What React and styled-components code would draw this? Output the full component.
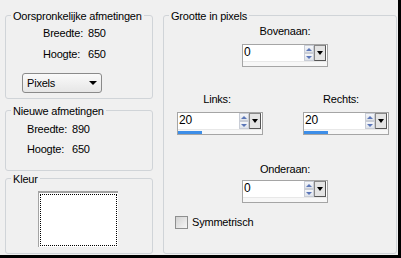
import React from "react";
import styled, { createGlobalStyle } from "styled-components";

const Global = createGlobalStyle`
  html, body { margin: 0; padding: 0; background: #000; }
  body { font-family: "Liberation Sans", Arial, sans-serif; font-size: 11px; letter-spacing: -0.2px; color: #000; }
`;

const Page = styled.div`
  width: 398px;
  height: 255px;
  box-sizing: border-box;
  background: #f0f0f0;
  display: flex;
  gap: 10px;
  padding: 15px 1px 1px 5px;
`;

const Column = styled.div`
  display: flex;
  flex-direction: column;
  width: 148px;
`;

const Frame = styled.div`
  position: relative;
  box-sizing: border-box;
  border: 1px solid #d0d4d8;
  border-radius: 3px;
  height: ${(p) => p.$h}px;
  width: ${(p) => (p.$w ? `${p.$w}px` : "auto")};
  margin-top: ${(p) => p.$mt || 0}px;
  padding: ${(p) => p.$pad};
`;

const Title = styled.span`
  position: absolute;
  top: -6px;
  left: 5px;
  padding: 0 2px;
  background: #f0f0f0;
  line-height: 13px;
  white-space: nowrap;
`;

const InfoGrid = styled.div`
  display: grid;
  grid-template-columns: 45px auto;
  row-gap: ${(p) => p.$gap}px;
  line-height: 13px;
  margin-left: ${(p) => p.$ml || 0}px;
`;

const Combo = styled.div`
  box-sizing: border-box;
  width: 80px;
  height: 20px;
  margin-top: 12px;
  border: 1px solid #8a8a8a;
  border-radius: 3px;
  background: linear-gradient(#fafafa, #e6e6e6);
  display: flex;
  align-items: center;
  justify-content: space-between;
  padding: 0 4px 0 4px;
  line-height: 13px;
`;

const Tri = styled.span`
  width: 0;
  height: 0;
  border-left: ${(p) => p.$s}px solid transparent;
  border-right: ${(p) => p.$s}px solid transparent;
  ${(p) => (p.$up ? "border-bottom" : "border-top")}: ${(p) => p.$h}px solid ${(p) => p.$c};
`;

const Swatch = styled.div`
  box-sizing: border-box;
  width: 80px;
  height: 56px;
  background: #fff;
  border-top: 2px solid #a3a3a3;
  border-left: 1px solid #a3a3a3;
  padding: 1px;
`;

const Focus = styled.div`
  box-sizing: border-box;
  width: 100%;
  height: 100%;
  border: 1px dotted #000;
`;

const Body = styled.div`
  display: flex;
  flex-direction: column;
  align-items: flex-start;
`;

const SideRow = styled.div`
  display: flex;
  gap: 40px;
  margin-top: ${(p) => p.$mt}px;
  margin-left: 2px;
`;

const Cell = styled.div`
  display: flex;
  flex-direction: column;
  align-items: center;
  gap: ${(p) => p.$gap}px;
  margin-top: ${(p) => p.$mt || 0}px;
  margin-left: ${(p) => p.$ml || 0}px;
`;

const Label = styled.span`
  line-height: 13px;
  position: relative;
  left: ${(p) => p.$dx || 0}px;
`;

const Spin = styled.div`
  box-sizing: border-box;
  width: 86px;
  height: 23px;
  border: 1px solid #a5a5a5;
  background: #fff;
  display: grid;
  grid-template-rows: 16px 5px;
`;

const EditRow = styled.div`
  display: flex;
`;

const Value = styled.span`
  flex: 1;
  line-height: 15px;
  padding-left: 1px;
  font-size: 12px;
`;

const Arrows = styled.div`
  width: 10px;
  display: flex;
  flex-direction: column;
`;

const ArrowBtn = styled.div`
  flex: 1;
  box-sizing: border-box;
  border: 1px solid #c9cdd6;
  background: linear-gradient(#f6f7fa, #dfe3ea);
  display: flex;
  align-items: center;
  justify-content: center;
`;

const DropBtn = styled.div`
  box-sizing: border-box;
  width: 12px;
  margin-right: 1px;
  border: 1px solid #555;
  border-top-color: #888;
  border-left-color: #888;
  background: #e4e4e4;
  display: flex;
  align-items: center;
  justify-content: center;
`;

const BarRow = styled.div`
  background: #f7f7f7;
  border-top: 1px solid #e8e8e8;
  padding-top: 1px;
`;

const Bar = styled.div`
  height: 3px;
  background: #3d8ee8;
`;

const CheckRow = styled.label`
  display: flex;
  align-items: center;
  gap: 4px;
  margin-top: 13px;
  line-height: 13px;
`;

const CheckBox = styled.span`
  box-sizing: border-box;
  width: 13px;
  height: 13px;
  border: 1px solid #8e8f8f;
  background: linear-gradient(135deg, #d2d2d2, #f6f6f6);
`;

function SpinBox({ value, pct }) {
  return (
    <Spin>
      <EditRow>
        <Value>{value}</Value>
        <Arrows>
          <ArrowBtn>
            <Tri $up $s={3} $h={3} $c="#5b76b8" />
          </ArrowBtn>
          <ArrowBtn>
            <Tri $s={3} $h={3} $c="#5b76b8" />
          </ArrowBtn>
        </Arrows>
        <DropBtn>
          <Tri $s={3} $h={4} $c="#000" />
        </DropBtn>
      </EditRow>
      <BarRow>{pct > 0 && <Bar style={{ width: `${pct}%` }} />}</BarRow>
    </Spin>
  );
}

export default function App() {
  return (
    <>
      <Global />
      <Page>
        <Column>
          <Frame $h={84} $pad="11px 0 0 16px">
            <Title>Oorspronkelijke afmetingen</Title>
            <InfoGrid $gap={8} $ml={21}>
              <span>Breedte:</span>
              <span>850</span>
              <span>Hoogte:</span>
              <span>650</span>
            </InfoGrid>
            <Combo>
              <span>Pixels</span>
              <Tri $s={4} $h={4} $c="#000" />
            </Combo>
          </Frame>
          <Frame $h={61} $mt={11} $pad="12px 0 0 21px">
            <Title>Nieuwe afmetingen</Title>
            <InfoGrid $gap={7}>
              <span>Breedte:</span>
              <span>890</span>
              <span>Hoogte:</span>
              <span>650</span>
            </InfoGrid>
          </Frame>
          <Frame $h={76} $mt={7} $pad="12px 0 0 32px">
            <Title>Kleur</Title>
            <Swatch>
              <Focus />
            </Swatch>
          </Frame>
        </Column>
        <Frame $h={239} $w={234} $pad="9px 0 0 11px">
          <Title>Grootte in pixels</Title>
          <Body>
            <Cell $gap={6} $ml={67}>
              <Label>Bovenaan:</Label>
              <SpinBox value="0" pct={0} />
            </Cell>
            <SideRow $mt={26}>
              <Cell $gap={6}>
                <Label $dx={-3}>Links:</Label>
                <SpinBox value="20" pct={29} />
              </Cell>
              <Cell $gap={6}>
                <Label $dx={-5}>Rechts:</Label>
                <SpinBox value="20" pct={29} />
              </Cell>
            </SideRow>
            <Cell $gap={4} $mt={28} $ml={67}>
              <Label>Onderaan:</Label>
              <SpinBox value="0" pct={0} />
            </Cell>
            <CheckRow>
              <CheckBox />
              <span>Symmetrisch</span>
            </CheckRow>
          </Body>
        </Frame>
      </Page>
    </>
  );
}
